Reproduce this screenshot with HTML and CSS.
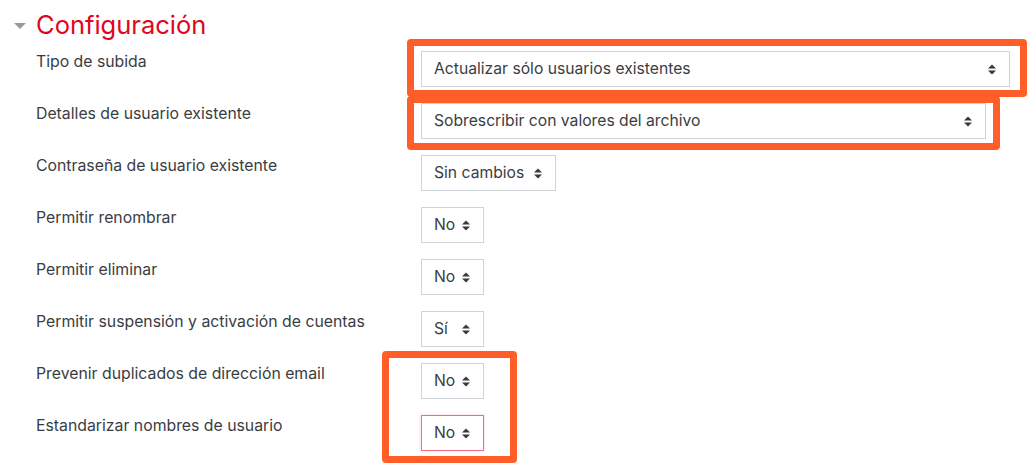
FILE: index.html
```html
<!DOCTYPE html>
<html lang="es">
<head>
<meta charset="utf-8">
<title>Configuración</title>
<link rel="stylesheet" href="styles.css">
</head>
<body>
<div class="page">
  <div class="section-head">
    <span class="caret"></span>
    <h3 class="section-title">Configuración</h3>
  </div>
  <div class="rows">
    <div class="row">
      <label class="row-label">Tipo de subida</label>
      <div class="sel sel-upload"><span>Actualizar sólo usuarios existentes</span><svg class="arrows" viewBox="0 0 8 11"><path d="M0 4.5 L4 0.5 L8 4.5 Z M0 6.5 L8 6.5 L4 10.5 Z"/></svg></div>
    </div>
    <div class="row">
      <label class="row-label">Detalles de usuario existente</label>
      <div class="sel sel-details"><span>Sobrescribir con valores del archivo</span><svg class="arrows" viewBox="0 0 8 11"><path d="M0 4.5 L4 0.5 L8 4.5 Z M0 6.5 L8 6.5 L4 10.5 Z"/></svg></div>
    </div>
    <div class="row">
      <label class="row-label">Contraseña de usuario existente</label>
      <div class="sel sel-pass"><span>Sin cambios</span><svg class="arrows" viewBox="0 0 8 11"><path d="M0 4.5 L4 0.5 L8 4.5 Z M0 6.5 L8 6.5 L4 10.5 Z"/></svg></div>
    </div>
    <div class="row">
      <label class="row-label">Permitir renombrar</label>
      <div class="sel sel-small"><span>No</span><svg class="arrows" viewBox="0 0 8 11"><path d="M0 4.5 L4 0.5 L8 4.5 Z M0 6.5 L8 6.5 L4 10.5 Z"/></svg></div>
    </div>
    <div class="row">
      <label class="row-label">Permitir eliminar</label>
      <div class="sel sel-small"><span>No</span><svg class="arrows" viewBox="0 0 8 11"><path d="M0 4.5 L4 0.5 L8 4.5 Z M0 6.5 L8 6.5 L4 10.5 Z"/></svg></div>
    </div>
    <div class="row">
      <label class="row-label">Permitir suspensión y activación de cuentas</label>
      <div class="sel sel-small"><span>Sí</span><svg class="arrows" viewBox="0 0 8 11"><path d="M0 4.5 L4 0.5 L8 4.5 Z M0 6.5 L8 6.5 L4 10.5 Z"/></svg></div>
    </div>
    <div class="row">
      <label class="row-label">Prevenir duplicados de dirección email</label>
      <div class="sel sel-small"><span>No</span><svg class="arrows" viewBox="0 0 8 11"><path d="M0 4.5 L4 0.5 L8 4.5 Z M0 6.5 L8 6.5 L4 10.5 Z"/></svg></div>
    </div>
    <div class="row">
      <label class="row-label">Estandarizar nombres de usuario</label>
      <div class="sel sel-small sel-focus"><span>No</span><svg class="arrows" viewBox="0 0 8 11"><path d="M0 4.5 L4 0.5 L8 4.5 Z M0 6.5 L8 6.5 L4 10.5 Z"/></svg></div>
    </div>
  </div>
  <div class="mark mark-upload"></div>
  <div class="mark mark-details"></div>
  <div class="mark mark-bottom"></div>
</div>
</body>
</html>
```

FILE: styles.css
```css
html, body {
  margin: 0;
  padding: 0;
  background: #ffffff;
}

body {
  font-family: "Inter", "Noto Sans", sans-serif;
  font-size: 15.8px;
  color: #3a3d42;
  width: 1028px;
  height: 467px;
  overflow: hidden;
}

.page {
  position: relative;
  height: 467px;
}

.section-head {
  display: flex;
  align-items: center;
  height: 50px;
  padding-left: 14px;
  gap: 10px;
}

.caret {
  width: 0;
  height: 0;
  border-left: 6px solid transparent;
  border-right: 6px solid transparent;
  border-top: 6px solid #9a9a9a;
  margin-top: 2px;
}

.section-title {
  margin: 0;
  font-size: 25.5px;
  font-weight: 400;
  color: #e0061d;
  line-height: 1.2;
}

.rows {
  margin-top: 1px;
  display: flex;
  flex-direction: column;
  gap: 16px;
}

.row {
  display: flex;
  align-items: flex-start;
  height: 36px;
  padding-left: 36px;
}

.row-label {
  width: 385px;
  flex: none;
  line-height: 22px;
  margin-top: 0;
}

.sel {
  box-sizing: border-box;
  height: 36px;
  display: flex;
  align-items: center;
  justify-content: space-between;
  padding: 0 13px 0 12px;
  border: 1px solid #ced4da;
  background: #ffffff;
  line-height: 22px;
  font-size: 15.7px;
}

.sel-upload { width: 589px; }
.sel-details { width: 565px; }
.sel-pass { width: 135px; }
.sel-small { width: 63px; }

.sel-focus {
  border-color: #f0707c;
  box-shadow: 0 0 3px rgba(240, 112, 124, 0.35);
}

.arrows {
  width: 8px;
  height: 11px;
  fill: #343a40;
  flex: none;
}

.mark {
  position: absolute;
  box-sizing: border-box;
  border: 7px solid #ff5e28;
  border-radius: 4px;
}

.mark-upload {
  left: 407px;
  top: 39px;
  width: 620px;
  height: 58px;
}

.mark-details {
  left: 407px;
  top: 96px;
  width: 593px;
  height: 54px;
}

.mark-bottom {
  left: 382px;
  top: 351px;
  width: 135px;
  height: 112px;
}
```
